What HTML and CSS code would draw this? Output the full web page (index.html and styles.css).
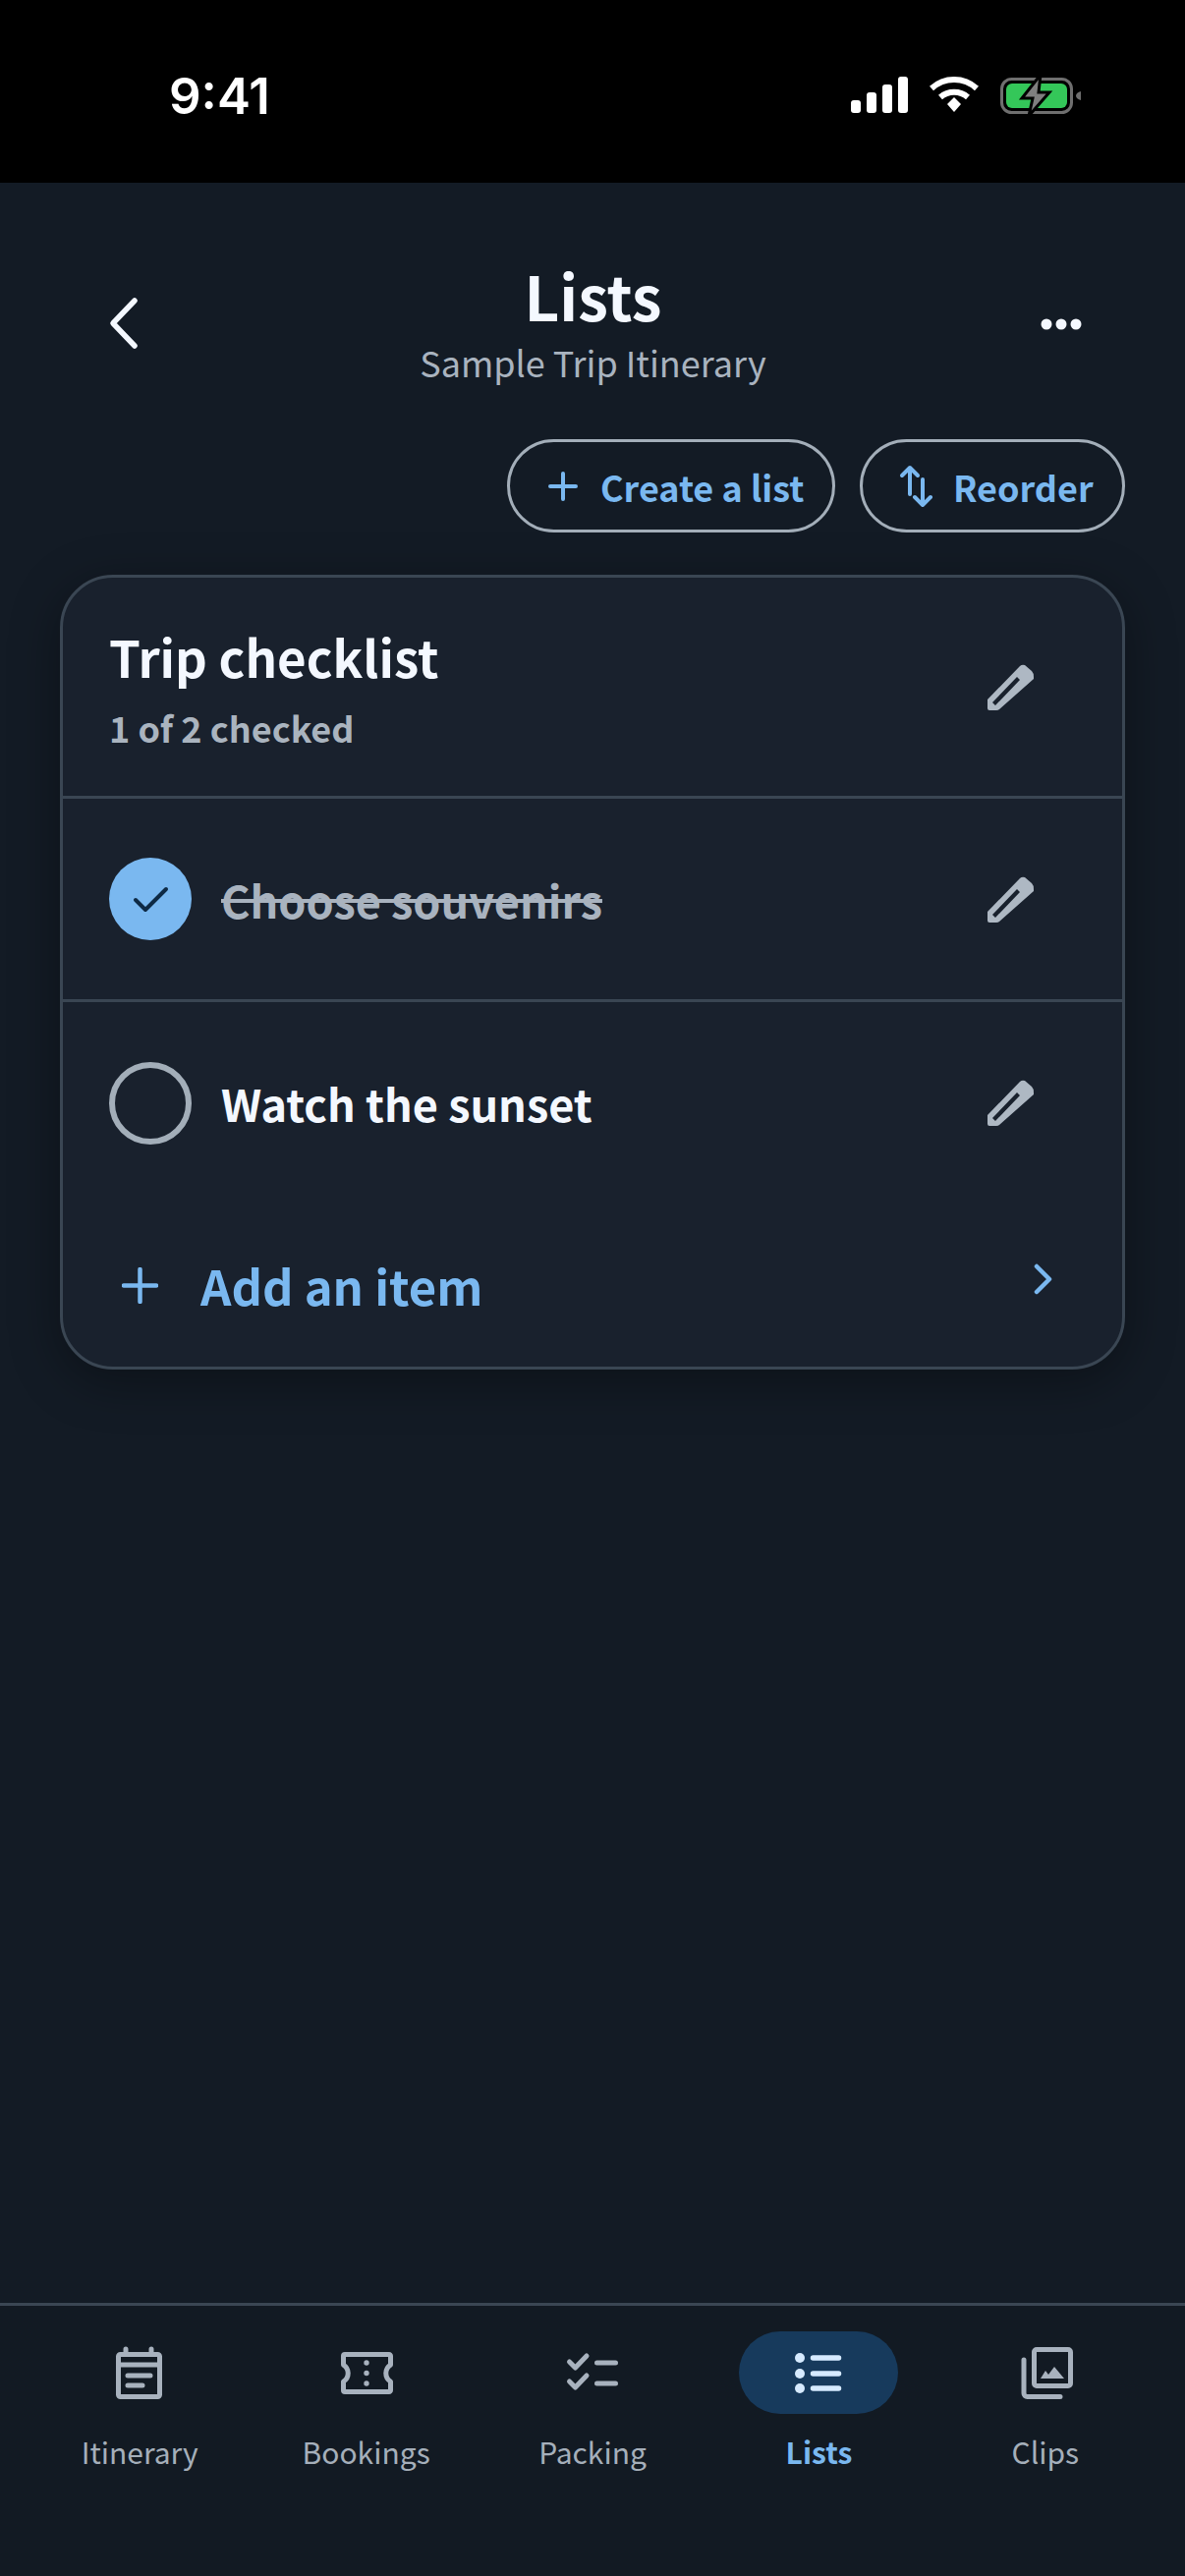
FILE: index.html
```html
<!DOCTYPE html>
<html lang="en">
<head>
    <meta charset="UTF-8">
    <meta name="viewport" content="width=device-width, initial-scale=1.0">
    <title>Lists</title>
    <link rel="stylesheet" href="styles.css">
</head>
<body>
    <div class="app">
        <!-- Status bar -->
        <div class="status-bar">
            <span class="time">9:41</span>
            <div class="status-icons">
                <svg width="58" height="38" viewBox="0 0 58 38" fill="#fff">
                    <rect x="0" y="24" width="10" height="13" rx="3"/>
                    <rect x="16" y="16" width="10" height="21" rx="3"/>
                    <rect x="32" y="8" width="10" height="29" rx="3"/>
                    <rect x="48" y="0" width="10" height="37" rx="3"/>
                </svg>
                <svg width="50" height="38" viewBox="0 0 50 38" fill="none" stroke="#fff" stroke-width="6">
                    <path d="M2 12 C15 0 35 0 48 12"/>
                    <path d="M11 21 C19 14 31 14 39 21"/>
                    <path d="M18 28 L25 21 L32 28 L25 36 Z" fill="#fff" stroke="none"/>
                </svg>
                <svg width="82" height="42" viewBox="0 0 82 42">
                    <rect x="1.5" y="4.5" width="71" height="34" rx="10" fill="none" stroke="#6f6f6f" stroke-width="3"/>
                    <rect x="6" y="9" width="62" height="25" rx="6" fill="#34c759"/>
                    <path d="M82 17 V26 C79 25 77 24 77 21.5 C77 19 79 18 82 17 Z" fill="#6f6f6f"/>
                    <path d="M41 0 L22 24 H33 L29 42 L50 18 H39 Z" fill="#7f7f7f" stroke="#000" stroke-width="3"/>
                </svg>
            </div>
        </div>

        <!-- Main screen -->
        <div class="screen">
            <div class="header">
                <button class="icon-btn back-btn">
                    <svg width="60" height="60" viewBox="0 0 60 60" fill="none" stroke="#f4f8ff" stroke-width="5.5" stroke-linecap="round" stroke-linejoin="round">
                        <path d="M40 7 L18 30 L40 53"/>
                    </svg>
                </button>
                <div class="header-title">
                    <h1>Lists</h1>
                    <div class="subtitle">Sample Trip Itinerary</div>
                </div>
                <button class="icon-btn">
                    <svg width="60" height="60" viewBox="0 0 60 60" fill="#f4f8ff">
                        <circle cx="15" cy="30" r="5.5"/>
                        <circle cx="30" cy="30" r="5.5"/>
                        <circle cx="45" cy="30" r="5.5"/>
                    </svg>
                </button>
            </div>

            <div class="actions">
                <button class="pill-btn pill-create">
                    <svg width="30" height="30" viewBox="0 0 30 30" stroke="#7ab8f0" stroke-width="4" stroke-linecap="round">
                        <path d="M15 2 V28 M2 15 H28"/>
                    </svg>
                    Create a list
                </button>
                <button class="pill-btn pill-reorder">
                    <svg width="36" height="44" viewBox="0 0 36 44" fill="none" stroke="#7ab8f0" stroke-width="4" stroke-linecap="round" stroke-linejoin="round">
                        <path d="M11 3 V30 M3 11 L11 3 L19 11"/>
                        <path d="M24 15 V41 M16 33 L24 41 L32 33"/>
                    </svg>
                    Reorder
                </button>
            </div>

            <div class="card">
                <div class="card-head">
                    <div>
                        <div class="card-title">Trip checklist</div>
                        <div class="card-count">1 of 2 checked</div>
                    </div>
                    <svg class="pencil" width="47" height="47" viewBox="0 0 47 47" fill="#aeb8c3" fill-rule="evenodd">
                        <path d="M0 36 L33 2 Q35 0 38 1 L45 7 Q47 9 47 13 L47 15 L12 46 Q11 47 9 47 L2 47 Q0 47 0 45 Z M5 39 L8 42 L33 16 L30 13 Z"/>
                    </svg>
                </div>
                <div class="item">
                    <div class="check check-on">
                        <svg width="84" height="84" viewBox="0 0 84 84" fill="none" stroke="#0e2a45" stroke-width="4" stroke-linecap="round" stroke-linejoin="round">
                            <path d="M27 43 L37 53 L58 32"/>
                        </svg>
                    </div>
                    <span class="item-text item-done">Choose souvenirs</span>
                    <svg class="pencil" width="47" height="47" viewBox="0 0 47 47" fill="#aeb8c3" fill-rule="evenodd">
                        <path d="M0 36 L33 2 Q35 0 38 1 L45 7 Q47 9 47 13 L47 15 L12 46 Q11 47 9 47 L2 47 Q0 47 0 45 Z M5 39 L8 42 L33 16 L30 13 Z"/>
                    </svg>
                </div>
                <div class="item item-last">
                    <div class="check"></div>
                    <span class="item-text">Watch the sunset</span>
                    <svg class="pencil" width="47" height="47" viewBox="0 0 47 47" fill="#aeb8c3" fill-rule="evenodd">
                        <path d="M0 36 L33 2 Q35 0 38 1 L45 7 Q47 9 47 13 L47 15 L12 46 Q11 47 9 47 L2 47 Q0 47 0 45 Z M5 39 L8 42 L33 16 L30 13 Z"/>
                    </svg>
                </div>
                <div class="add-row">
                    <svg width="37" height="37" viewBox="0 0 37 37" stroke="#7ab8f0" stroke-width="4.5" stroke-linecap="round">
                        <path d="M18.5 2 V35 M2 18.5 H35"/>
                    </svg>
                    <span class="add-text">Add an item</span>
                    <svg class="add-arrow" width="20" height="32" viewBox="0 0 20 32" fill="none" stroke="#7ab8f0" stroke-width="4.5" stroke-linecap="round" stroke-linejoin="round">
                        <path d="M3 3 L16 16 L3 29"/>
                    </svg>
                </div>
            </div>
        </div>

        <!-- Bottom tabs -->
        <div class="tabs">
            <div class="tab">
                <div class="tab-icon">
                    <svg width="60" height="60" viewBox="0 0 60 60" fill="none" stroke="#a8b2be" stroke-width="5" stroke-linecap="round" stroke-linejoin="round">
                        <rect x="8.5" y="11.5" width="42" height="43" rx="2"/>
                        <path d="M8.5 22 H50.5 M16 6 V11 M42 6 V11 M18 33 H41 M18 43 H33"/>
                    </svg>
                </div>
                <span>Itinerary</span>
            </div>
            <div class="tab">
                <div class="tab-icon">
                    <svg width="60" height="60" viewBox="0 0 60 60" fill="none" stroke="#a8b2be" stroke-width="5" stroke-linejoin="round">
                        <path d="M8 11.5 H53 a1.5 1.5 0 0 1 1.5 1.5 V22 a10 10 0 0 0 0 17 V48 a1.5 1.5 0 0 1 -1.5 1.5 H8 a1.5 1.5 0 0 1 -1.5 -1.5 V39 a10 10 0 0 0 0 -17 V13 a1.5 1.5 0 0 1 1.5 -1.5 Z"/>
                        <circle cx="30" cy="20" r="2.7" fill="#a8b2be" stroke="none"/>
                        <circle cx="30" cy="30.5" r="2.7" fill="#a8b2be" stroke="none"/>
                        <circle cx="30" cy="41" r="2.7" fill="#a8b2be" stroke="none"/>
                    </svg>
                </div>
                <span>Bookings</span>
            </div>
            <div class="tab">
                <div class="tab-icon">
                    <svg width="60" height="60" viewBox="0 0 60 60" fill="none" stroke="#a8b2be" stroke-width="5" stroke-linecap="round" stroke-linejoin="round">
                        <path d="M6.5 19 L12.5 25 L24 13 M6.5 39 L12.5 45 L24 33 M34.5 20 H53.5 M34.5 41 H53.5"/>
                    </svg>
                </div>
                <span>Packing</span>
            </div>
            <div class="tab tab-active">
                <div class="tab-icon">
                    <svg width="60" height="60" viewBox="0 0 60 60" fill="#d6eaff" stroke="#d6eaff" stroke-linecap="round">
                        <circle cx="11" cy="15" r="5" stroke="none"/>
                        <circle cx="11" cy="31" r="5" stroke="none"/>
                        <circle cx="11" cy="46" r="5" stroke="none"/>
                        <path d="M24.5 15 H50.5 M24.5 31 H50.5 M24.5 46 H50.5" stroke-width="5.5"/>
                    </svg>
                </div>
                <span>Lists</span>
            </div>
            <div class="tab">
                <div class="tab-icon">
                    <svg width="60" height="60" viewBox="0 0 60 60" fill="none" stroke="#a8b2be" stroke-width="5" stroke-linecap="round" stroke-linejoin="round">
                        <rect x="18.5" y="6.5" width="37" height="37" rx="2.5"/>
                        <path d="M8 17 V51 a3.5 3.5 0 0 0 3.5 3.5 H45"/>
                        <path d="M25 36 L30 28 L33 32 L39 24 L49 36 Z" fill="#a8b2be" stroke="none"/>
                    </svg>
                </div>
                <span>Clips</span>
            </div>
        </div>
    </div>
</body>
</html>
```

FILE: styles.css
```css
* {
    box-sizing: border-box;
}
body {
    margin: 0;
    background-color: #131b25;
    font-family: "Noto Sans CJK SC", "Noto Sans", sans-serif;
    color: #f4f8ff;
}
.app {
    width: 1206px;
    height: 2622px;
    display: flex;
    flex-direction: column;
    overflow: hidden;
}
button {
    font-family: inherit;
    background: none;
    color: inherit;
    cursor: pointer;
}
svg {
    flex-shrink: 0;
}

/* Status bar */
.status-bar {
    height: 186px;
    background-color: #000;
    display: flex;
    align-items: center;
    justify-content: space-between;
    padding: 8px 106px 0 172px;
}
.time {
    font-family: "Inter", sans-serif;
    font-size: 51px;
    font-weight: 600;
    color: #fff;
}
.status-icons {
    display: flex;
    align-items: center;
    gap: 22px;
}

/* Header */
.screen {
    flex: 1;
}
.header {
    height: 261px;
    padding: 78px 96px 50px 97px;
    display: flex;
    align-items: center;
    justify-content: space-between;
}
.icon-btn {
    border: none;
    padding: 0;
    width: 60px;
    height: 60px;
    margin-top: -2px;
}
.back-btn {
    margin-top: -4px;
}
.header-title {
    text-align: center;
}
h1 {
    margin: -6px 0 0;
    font-size: 62px;
    font-weight: 600;
    line-height: 76px;
}
.subtitle {
    font-size: 36px;
    line-height: 50px;
    margin-top: 5px;
    color: #a9b3bf;
}
.actions {
    display: flex;
    justify-content: flex-end;
    gap: 25px;
    padding-right: 61px;
}
.pill-btn {
    height: 95px;
    border: 3px solid #a3aeb9;
    border-radius: 48px;
    display: flex;
    align-items: center;
    color: #7ab8f0;
    font-size: 36px;
    font-weight: 600;
    white-space: nowrap;
}
.pill-create {
    width: 334px;
    padding: 0 30px 0 39px;
    gap: 23px;
}
.pill-reorder {
    width: 270px;
    padding: 0 30px 0 37px;
    gap: 19px;
}

/* Card */
.card {
    margin: 43px 61px 0;
    height: 809px;
    background-color: #19212d;
    border: 3px solid #3a4653;
    border-radius: 54px;
    box-shadow: 0 12px 50px rgba(0, 0, 0, 0.35);
}
.card-head {
    height: 225px;
    padding: 0 90px 0 47px;
    display: flex;
    align-items: center;
    justify-content: space-between;
    border-bottom: 3px solid #3a4653;
}
.card-title {
    font-size: 51px;
    font-weight: 600;
    line-height: 70px;
}
.card-count {
    font-size: 36px;
    font-weight: 600;
    line-height: 50px;
    margin-top: 12px;
    color: #aab4bf;
}
.item {
    height: 207px;
    padding: 0 90px 0 47px;
    display: flex;
    align-items: center;
    border-bottom: 3px solid #3a4653;
}
.item-last {
    height: 205px;
    border-bottom: none;
}
.check {
    width: 84px;
    height: 84px;
    border-radius: 50%;
    border: 6px solid #a3aeb9;
    margin-right: 30px;
    flex-shrink: 0;
}
.check-on {
    border: none;
    background-color: #7ab8f0;
}
.item-text {
    flex: 1;
    font-size: 45px;
    font-weight: 600;
}
.item-done {
    color: #a9b3bf;
    text-decoration: line-through;
}
.add-row {
    padding: 44px 70px 0 60px;
    display: flex;
    align-items: center;
}
.add-text {
    flex: 1;
    margin-left: 43px;
    font-size: 49px;
    line-height: 78px;
    font-weight: 600;
    color: #7ab8f0;
}
.add-arrow {
    margin-top: -12px;
}

/* Bottom tabs */
.tabs {
    height: 278px;
    padding: 26px 27px 0;
    border-top: 3px solid #3a4653;
    background-color: #121a23;
    display: flex;
}
.tab {
    flex: 1;
    display: flex;
    flex-direction: column;
    align-items: center;
    color: #a5afba;
    font-size: 30px;
}
.tab span {
    margin-top: 13px;
    line-height: 50px;
}
.tab-icon {
    width: 162px;
    height: 84px;
    border-radius: 42px;
    display: flex;
    align-items: center;
    justify-content: center;
}
.tab-active {
    color: #7ab8f0;
    font-weight: 600;
}
.tab-active .tab-icon {
    background-color: #173a5c;
}
```
